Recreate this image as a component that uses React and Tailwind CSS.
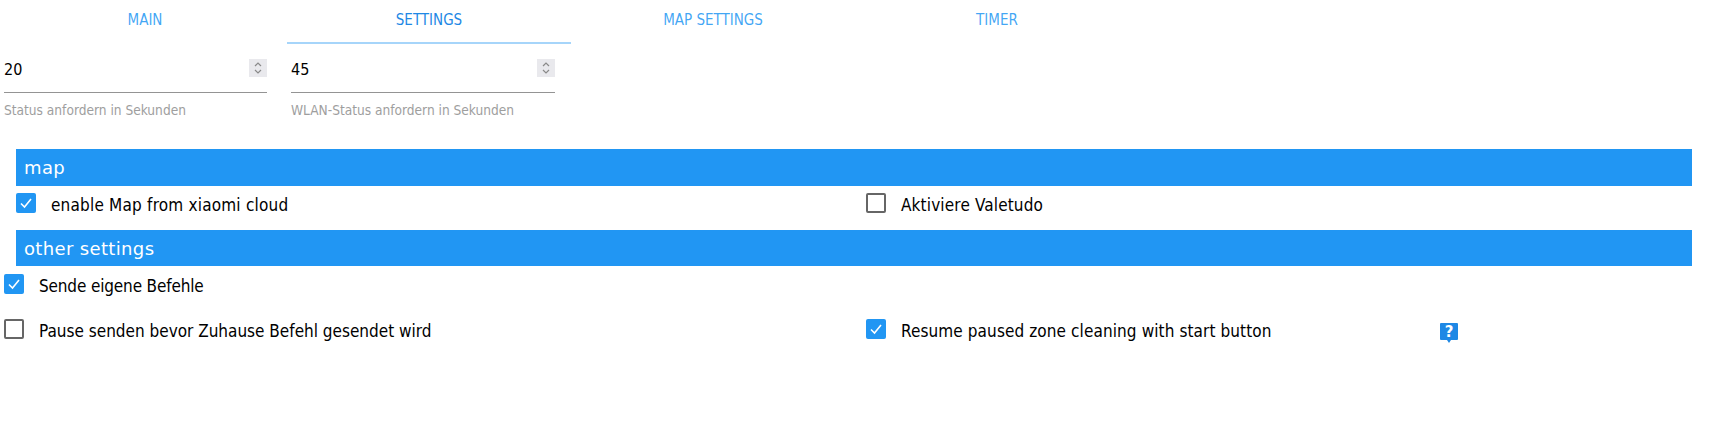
import React from 'react'

const font = 'font-["DejaVu_Sans_Condensed","DejaVu_Sans",sans-serif]'

const Tab = ({ label, active }) => (
  <div className={`w-[284px] h-[44px] flex items-start justify-center pt-[12px] text-[15px] leading-[16px] uppercase ${active ? 'text-[#1e88e5] border-b-2 border-[#a6d5fa]' : 'text-[#2196f3]/85'}`}>
    {label}
  </div>
)

const NumberField = ({ value, helper, width }) => (
  <div className={`${width} shrink-0`}>
    <div className="h-[36px] flex items-start justify-between border-b border-[#949494] pt-[2px]">
      <span className="text-[16px] leading-[20px] mt-[1px] text-black">{value}</span>
      <div className="w-[18px] h-[18px] bg-[#e9e9ed] flex flex-col items-center justify-center">
        <svg width="10" height="14" viewBox="0 0 10 14" fill="none" stroke="#8a8a8a" strokeWidth="1.2">
          <path d="M2 5 L5 2 L8 5" />
          <path d="M2 9 L5 12 L8 9" />
        </svg>
      </div>
    </div>
    <p className="text-[13.6px] leading-[16px] mt-[9px] text-[#9e9e9e]">{helper}</p>
  </div>
)

const Checkbox = ({ checked, label, tracking }) => (
  <label className="flex items-start">
    {checked ? (
      <span className="w-[20px] h-[20px] rounded-[2px] bg-[#2196f3] flex items-center justify-center">
        <svg width="14" height="14" viewBox="0 0 14 14" fill="none" stroke="white" strokeWidth="1.6">
          <path d="M2 7.5 L5.5 11 L12 3" />
        </svg>
      </span>
    ) : (
      <span className="w-[20px] h-[20px] rounded-[2px] border-2 border-[#666666] bg-white" />
    )}
    <span className={`ml-[15px] mt-[2px] text-[17px] leading-[20px] text-black ${tracking}`}>{label}</span>
  </label>
)

const Header = ({ children, tall }) => (
  <div className={`ml-[16px] mr-[20px] bg-[#2196f3] text-white text-[18px] pl-[8px] tracking-[0.35px] font-["DejaVu_Sans",sans-serif] ${tall ? 'h-[37px] leading-[38px]' : 'h-[36px] leading-[37px]'}`}>
    {children}
  </div>
)

const HelpIcon = () => (
  <svg width="18" height="20" viewBox="1 0 18 20" className="mt-[4px]">
    <path d="M2 0 H18 a1 1 0 0 1 1 1 V16 a1 1 0 0 1 -1 1 H12 L10 20 L8 17 H2 a1 1 0 0 1 -1 -1 V1 a1 1 0 0 1 1 -1 Z" fill="#1e88e5" />
    <text x="10" y="14" textAnchor="middle" fontSize="15" fontWeight="700" fill="white" fontFamily="DejaVu Sans">?</text>
  </svg>
)

const App = () => {
  return (
    <div className={`w-[1712px] h-[432px] bg-white overflow-hidden ${font}`}>
      <div className="flex pl-[3px]">
        <Tab label="Main" />
        <Tab label="Settings" active />
        <Tab label="Map Settings" />
        <Tab label="Timer" />
      </div>
      <div className="flex gap-[24px] pl-[4px] pt-[13px] h-[105px]">
        <NumberField value="20" helper="Status anfordern in Sekunden" width="w-[263px]" />
        <NumberField value="45" helper="WLAN-Status anfordern in Sekunden" width="w-[264px]" />
      </div>
      <Header tall>map</Header>
      <div className="flex items-start pl-[16px] pt-[7px] h-[44px]">
        <div className="w-[850px]">
          <Checkbox checked label="enable Map from xiaomi cloud" tracking="tracking-[0.2px]" />
        </div>
        <Checkbox label="Aktiviere Valetudo" tracking="tracking-[0.15px]" />
      </div>
      <Header>other settings</Header>
      <div className="pl-[4px] pt-[8px]">
        <Checkbox checked label="Sende eigene Befehle" tracking="tracking-[-0.15px]" />
      </div>
      <div className="flex items-start pl-[4px] pt-[23px]">
        <div className="w-[862px]">
          <Checkbox label="Pause senden bevor Zuhause Befehl gesendet wird" />
        </div>
        <div className="w-[574px]">
          <Checkbox checked label="Resume paused zone cleaning with start button" tracking="tracking-[0.1px]" />
        </div>
        <HelpIcon />
      </div>
    </div>
  )
}

export default App
